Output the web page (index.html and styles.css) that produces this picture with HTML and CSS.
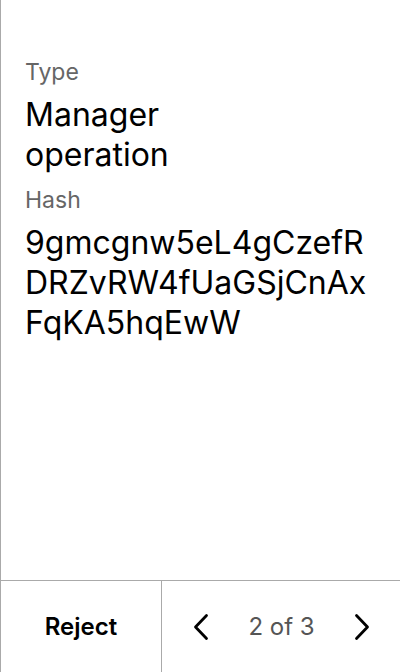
FILE: index.html
```html
<!DOCTYPE html>
<html>
<head>
<meta charset="utf-8">
<link rel="stylesheet" href="styles.css">
</head>
<body>
<div class="panel">
  <div class="content">
    <div class="label">Type</div>
    <div class="value">Manager<br>operation</div>
    <div class="label">Hash</div>
    <div class="value hash">9gmcgnw5eL4gCzefR<br>DRZvRW4fUaGSjCnAx<br>FqKA5hqEwW</div>
  </div>
  <div class="footer">
    <div class="reject">Reject</div>
    <div class="pager">
      <svg class="chev" width="20" height="28" viewBox="0 0 20 28"><path d="M15.5 2.5 L4.5 14 L15.5 25.5" fill="none" stroke="#000" stroke-width="2.8" stroke-linecap="round" stroke-linejoin="round"/></svg>
      <span class="count">2 of 3</span>
      <svg class="chev" width="20" height="28" viewBox="0 0 20 28"><path d="M4.5 2.5 L15.5 14 L4.5 25.5" fill="none" stroke="#000" stroke-width="2.8" stroke-linecap="round" stroke-linejoin="round"/></svg>
    </div>
  </div>
</div>
</body>
</html>
```
FILE: styles.css
```css
html, body { margin: 0; padding: 0; background: #fff; }
body { font-family: Inter, "Noto Sans", sans-serif; color: #000; }
.panel {
  width: 400px; height: 672px; box-sizing: border-box;
  border-left: 1px solid #aaa;
  display: flex; flex-direction: column;
}
.content { flex: 1; padding: 57px 24px 0 24px; }
.label { font-size: 23px; line-height: 30px; color: #666; margin-bottom: 8px; }
.value { font-size: 32px; line-height: 40px; margin-bottom: 10px; }
.footer {
  height: 92px; box-sizing: border-box; border-top: 1px solid #aaa;
  display: flex;
}
.reject {
  width: 160px; border-right: 1px solid #aaa;
  display: flex; align-items: center; justify-content: center;
  font-size: 24px; font-weight: 600;
}
.pager { flex: 1; display: flex; align-items: center; justify-content: space-between; padding: 0 28px 0 29px; }
.count { font-size: 24px; color: #555; }
.chev { display: block; }
```
